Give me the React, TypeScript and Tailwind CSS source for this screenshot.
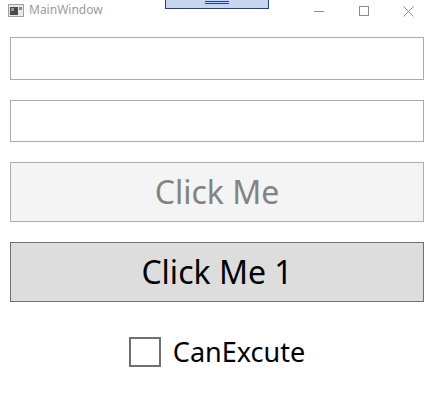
import { useState } from "react";

function TitleBar() {
  return (
    <div className="relative h-[27px] flex items-start">
      <svg className="mt-[4px] ml-[8px]" width="16" height="13" viewBox="0 0 16 13">
        <rect x="0.5" y="0.5" width="15" height="12" fill="#e8e8e8" stroke="#a0a0a0" />
        <rect x="2" y="3" width="8" height="8" fill="#4a4a4a" />
        <rect x="3" y="4" width="3" height="3" fill="#9a9a9a" />
        <rect x="11" y="3" width="3" height="3" fill="#8a8a8a" />
      </svg>
      <span className="ml-[5px] mt-[3px] text-[12px] leading-[14px] text-[#9b9b9b] font-['Noto_Sans',sans-serif]">
        MainWindow
      </span>
      <div className="absolute left-[165px] top-0 w-[104px] h-[9px] bg-[#c9d4ef] border border-t-0 border-[#23417f] flex flex-col items-center pt-[1px] gap-[1px]">
        <div className="w-[24px] h-px bg-[#23417f]" />
        <div className="w-[24px] h-px bg-[#23417f]" />
      </div>
      <div className="ml-auto flex items-start">
        <div className="w-[45px] h-[22px] flex items-center justify-center">
          <div className="w-[10px] h-px bg-[#8c8c8c]" />
        </div>
        <div className="w-[45px] h-[22px] flex items-center justify-center">
          <div className="w-[10px] h-[10px] border border-[#8c8c8c]" />
        </div>
        <div className="w-[45px] h-[22px] flex items-center justify-center mr-[3px]">
          <svg width="11" height="11" viewBox="0 0 11 11">
            <path d="M0.5 0.5L10.5 10.5M10.5 0.5L0.5 10.5" stroke="#8c8c8c" strokeWidth="1" />
          </svg>
        </div>
      </div>
    </div>
  );
}

export default function App() {
  const [canExecute, setCanExecute] = useState(false);
  return (
    <div className="w-[434px] h-[420px] bg-white font-['Noto_Sans',sans-serif] overflow-hidden">
      <TitleBar />
      <div className="flex flex-col px-[10px] pt-[10px] gap-[20px]">
        <input className="h-[43px] border border-[#ababab] outline-none px-2" />
        <input className="h-[42px] border border-[#ababab] outline-none px-2" />
        <button
          disabled={!canExecute}
          className={
            canExecute
              ? "h-[60px] bg-[#dddddd] border border-[#707070] text-[32px] text-black"
              : "h-[60px] bg-[#f4f4f4] border border-[#adadad] text-[32px] text-[#838383]"
          }
        >
          Click Me
        </button>
        <button className="h-[60px] bg-[#dddddd] border border-[#707070] text-[32px] text-black">
          Click Me 1
        </button>
      </div>
      <div className="flex justify-center items-center mt-[35px] gap-[12px]">
        <button
          onClick={() => setCanExecute(!canExecute)}
          className="w-[32px] h-[30px] border-2 border-[#707070] bg-white"
        >
          {canExecute && <span className="text-[20px] leading-none">✓</span>}
        </button>
        <span className="text-[27px] leading-[30px] text-black">CanExcute</span>
      </div>
    </div>
  );
}
